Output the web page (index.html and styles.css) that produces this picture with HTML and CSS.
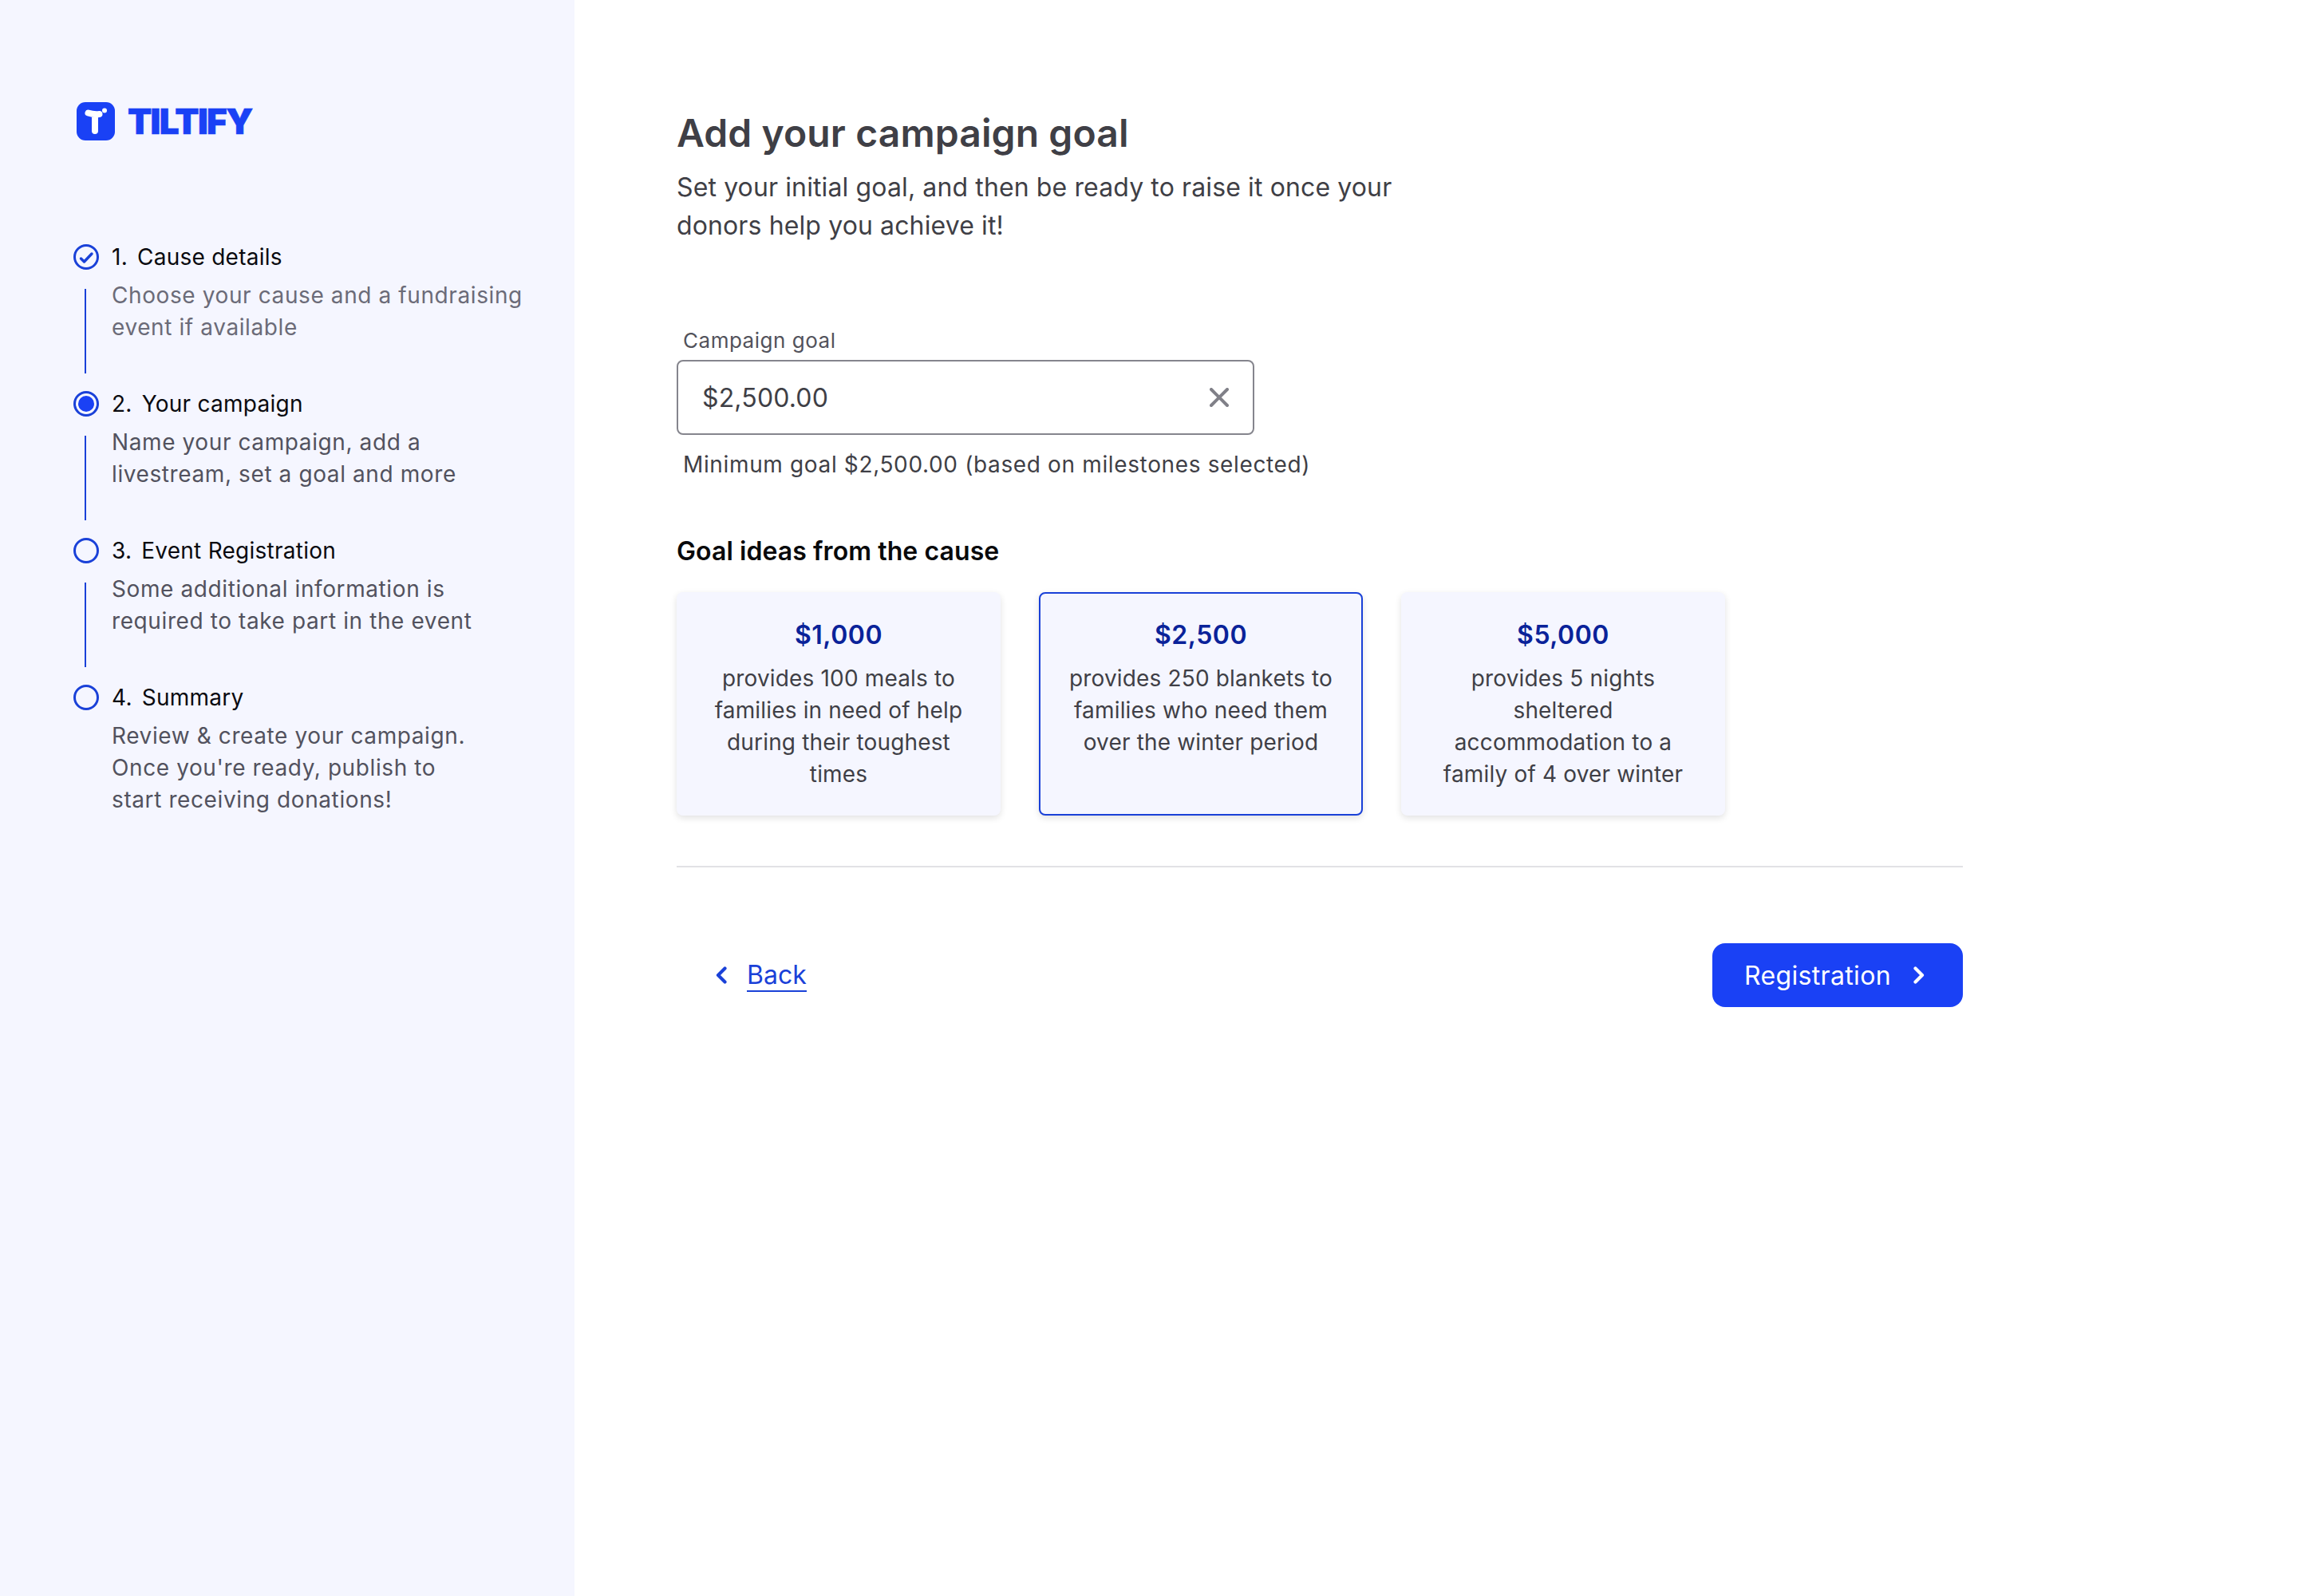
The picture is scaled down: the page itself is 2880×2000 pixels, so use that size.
FILE: index.html
```html
<!DOCTYPE html>
<html lang="en">
<head>
<meta charset="utf-8">
<title>Tiltify</title>
<link rel="stylesheet" href="styles.css">
</head>
<body>
<div class="page">
  <aside class="sidebar">
    <div class="logo">
      <svg class="logo-icon" viewBox="0 0 48 48" width="48" height="48"><rect width="48" height="48" rx="11" fill="#1a41f5"/><path d="M14.5 13.5 C19 15 24 15.5 28.5 15 M23 16 V36" stroke="#fff" stroke-width="8" stroke-linecap="round" fill="none"/><circle cx="35" cy="10.5" r="3" fill="#fff"/></svg>
      <span class="logo-text">TILTIFY</span>
    </div>
    <ol class="steps">
      <li class="step">
        <div class="step-head">
          <svg class="step-icon" viewBox="0 0 32 32" width="32" height="32"><circle cx="16" cy="16" r="14.5" fill="none" stroke="#1a41d8" stroke-width="3"/><path d="M9.5 18 L13.5 22 L23 12" fill="none" stroke="#1a41d8" stroke-width="3.4" stroke-linecap="round" stroke-linejoin="round"/></svg>
          <span class="step-num">1.</span><span>Cause details</span>
        </div>
        <div class="step-body"><div class="step-rail"><i class="step-line"></i></div><p class="step-desc faded">Choose your cause and a fundraising<br>event if available</p></div>
      </li>
      <li class="step">
        <div class="step-head">
          <svg class="step-icon" viewBox="0 0 32 32" width="32" height="32"><circle cx="16" cy="16" r="14.5" fill="none" stroke="#1a41d8" stroke-width="3"/><circle cx="16" cy="16" r="10" fill="#1a41f5"/></svg>
          <span class="step-num">2.</span><span>Your campaign</span>
        </div>
        <div class="step-body"><div class="step-rail"><i class="step-line"></i></div><p class="step-desc">Name your campaign, add a<br>livestream, set a goal and more</p></div>
      </li>
      <li class="step">
        <div class="step-head">
          <svg class="step-icon" viewBox="0 0 32 32" width="32" height="32"><circle cx="16" cy="16" r="14.5" fill="none" stroke="#1a41d8" stroke-width="3"/></svg>
          <span class="step-num">3.</span><span>Event Registration</span>
        </div>
        <div class="step-body"><div class="step-rail"><i class="step-line"></i></div><p class="step-desc">Some additional information is<br>required to take part in the event</p></div>
      </li>
      <li class="step">
        <div class="step-head">
          <svg class="step-icon" viewBox="0 0 32 32" width="32" height="32"><circle cx="16" cy="16" r="14.5" fill="none" stroke="#1a41d8" stroke-width="3"/></svg>
          <span class="step-num">4.</span><span>Summary</span>
        </div>
        <div class="step-body"><div class="step-rail"></div><p class="step-desc">Review &amp; create your campaign.<br>Once you're ready, publish to<br>start receiving donations!</p></div>
      </li>
    </ol>
  </aside>
  <main class="main">
    <h1 class="title">Add your campaign goal</h1>
    <p class="lead">Set your initial goal, and then be ready to raise it once your<br>donors help you achieve it!</p>
    <label class="field-label">Campaign goal</label>
    <div class="input">
      <span>$2,500.00</span>
      <svg viewBox="0 0 24 24" width="24" height="24"><path d="M2 2 L22 22 M22 2 L2 22" stroke="#808088" stroke-width="4" fill="none" stroke-linecap="round"/></svg>
    </div>
    <p class="hint">Minimum goal $2,500.00 (based on milestones selected)</p>
    <h2 class="subtitle">Goal ideas from the cause</h2>
    <div class="cards">
      <div class="card"><div class="amount">$1,000</div><p class="card-text">provides 100 meals to families in need of help during their toughest times</p></div>
      <div class="card selected"><div class="amount">$2,500</div><p class="card-text">provides 250 blankets to families who need them over the winter period</p></div>
      <div class="card"><div class="amount">$5,000</div><p class="card-text">provides 5 nights sheltered accommodation to a family of 4 over winter</p></div>
    </div>
    <hr class="divider">
    <div class="actions">
      <a class="back" href="#">
        <svg viewBox="0 0 14 22" width="14" height="22"><path d="M11.5 2.5 L3 11 L11.5 19.5" fill="none" stroke="#1a41d8" stroke-width="4.2" stroke-linecap="round" stroke-linejoin="round"/></svg>
        <span class="back-text">Back</span>
      </a>
      <button class="next">Registration
        <svg viewBox="0 0 14 22" width="14" height="22"><path d="M2.5 2.5 L11 11 L2.5 19.5" fill="none" stroke="#fff" stroke-width="4.2" stroke-linecap="round" stroke-linejoin="round"/></svg>
      </button>
    </div>
  </main>
</div>
</body>
</html>
```
FILE: styles.css
```css
* { box-sizing: border-box; }
html, body { margin: 0; padding: 0; background: #fff; }
body { font-family: "Inter", "Liberation Sans", sans-serif; color: #3f3f46; }
.page { display: flex; min-height: 2000px; }
.sidebar { width: 720px; flex: none; background: #f5f6ff; padding: 128px 0 0 92px; }
.logo { display: flex; align-items: center; gap: 16px; height: 48px; margin-left: 4px; }
.logo-icon { display: block; }
.logo-text { font-size: 44px; line-height: 48px; font-weight: 900; color: #1a41f5; letter-spacing: -1.6px; -webkit-text-stroke: .6px #1a41f5; }
.steps { list-style: none; margin: 130px 0 0; padding: 0; }
.step { display: block; }
.step-head { display: flex; align-items: center; height: 32px; font-size: 28px; line-height: 32px; letter-spacing: .25px; color: #0a0a0f; }
.step-icon { display: block; flex: none; margin-right: 16px; }
.step-num { margin-right: 12px; }
.step-body { display: flex; margin-top: 12px; min-height: 140px; }
.step-rail { width: 32px; flex: none; margin-right: 16px; display: flex; justify-content: center; padding: 12px 0 22px; }
.step-line { display: block; width: 2px; background: #1a41d8; margin-right: 2px; }
.step-desc { margin: 0; font-size: 28px; line-height: 40px; letter-spacing: .6px; color: #52525e; }
.step-desc.faded { color: #6b6b78; }
.main { flex: 1; padding: 137px 0 0 128px; }
.main > * { width: 1612px; }
.title { margin: 0; font-size: 48px; line-height: 60px; font-weight: 600; letter-spacing: .1px; color: #3f3f46; }
.lead { margin: 14px 0 0; font-size: 32px; line-height: 48px; letter-spacing: .12px; color: #3f3f46; }
.field-label { display: block; margin: 102px 0 6px; padding-left: 8px; font-size: 26px; line-height: 36px; letter-spacing: .52px; color: #52525b; }
.main > .input { width: 724px; height: 94px; display: flex; align-items: center; justify-content: space-between; padding: 0 30px; border: 2px solid #85858d; border-radius: 8px; font-size: 32px; letter-spacing: .16px; color: #3f3f46; background: #fff; }
.hint { margin: 17px 0 0; padding-left: 8px; font-size: 28px; line-height: 40px; letter-spacing: .64px; color: #3f3f46; }
.subtitle { margin: 69px 0 0; font-size: 32px; line-height: 40px; font-weight: 600; letter-spacing: .08px; color: #09090b; }
.main > .cards { display: flex; gap: 48px; margin-top: 31px; }
.card { width: 406px; height: 280px; padding: 32px 30px 0; background: #f5f6ff; border-radius: 8px; box-shadow: 0 3px 8px rgba(0, 0, 0, .12); text-align: center; }
.card.selected { border: 2px solid #1a41d8; padding: 30px 28px 0; }
.amount { font-size: 32px; line-height: 44px; font-weight: 600; letter-spacing: .5px; color: #0a2299; }
.card-text { margin: 12px 0 0; font-size: 28px; line-height: 40px; letter-spacing: .16px; color: #3f3f46; }
.divider { border: 0; height: 2px; background: #e2e2e5; margin: 63px 0 0; }
.actions { display: flex; align-items: center; justify-content: space-between; margin-top: 95px; }
.back { display: flex; align-items: center; gap: 25px; padding: 2px 0 0 49px; color: #1a41d8; font-size: 32px; text-decoration: none; }
.back-text { display: block; line-height: 38px; border-bottom: 2px solid #1a41d8; }
.back svg { margin-top: -2px; }
.next { display: flex; align-items: center; gap: 28px; height: 80px; padding: 0 48px 0 40px; border: 0; border-radius: 16px; background: #1a41f5; color: #fff; font: inherit; font-size: 32px; letter-spacing: .35px; }
```
